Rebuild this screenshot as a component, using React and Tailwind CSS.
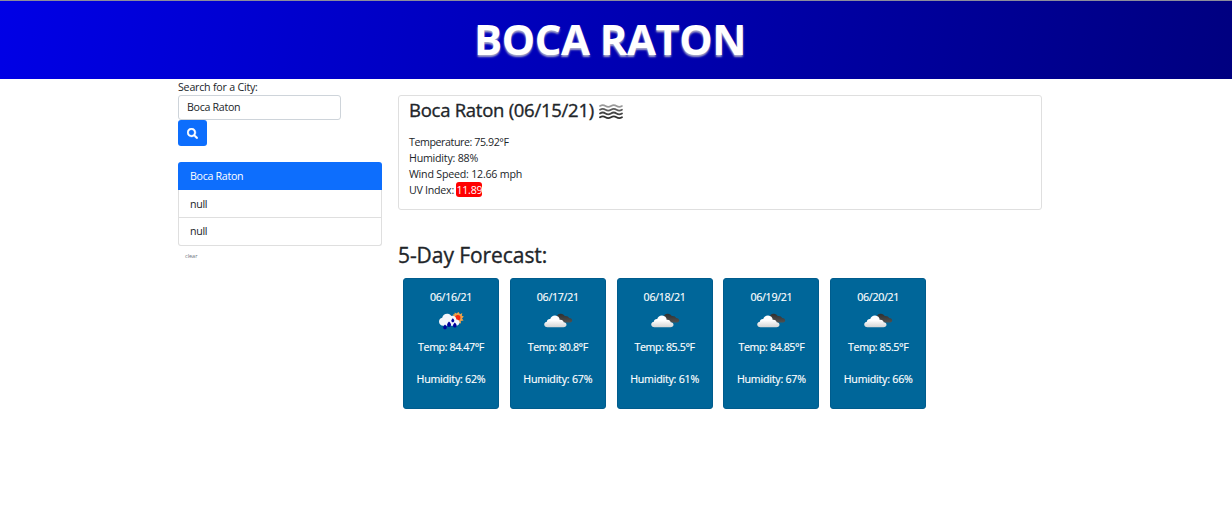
const forecast = [
  { date: '06/16/21', temp: '84.47', humidity: 62, icon: 'rain' },
  { date: '06/17/21', temp: '80.8', humidity: 67, icon: 'cloud' },
  { date: '06/18/21', temp: '85.5', humidity: 61, icon: 'cloud' },
  { date: '06/19/21', temp: '84.85', humidity: 67, icon: 'cloud' },
  { date: '06/20/21', temp: '85.5', humidity: 66, icon: 'cloud' },
];

function CloudIcon() {
  return (
    <svg width="34" height="34" viewBox="0 0 34 34" className="block">
      <defs>
        <linearGradient id="cloudFill" x1="0" y1="0" x2="0" y2="1">
          <stop offset="0.4" stopColor="#ffffff" />
          <stop offset="1" stopColor="#d4d4d4" />
        </linearGradient>
        <linearGradient id="darkFill" x1="0" y1="0" x2="0" y2="1">
          <stop offset="0" stopColor="#303030" />
          <stop offset="1" stopColor="#505050" />
        </linearGradient>
      </defs>
      <path d="M15.500 12.500c.3-2.800 2.300-4.100 4.500-3.700 1.600.1 2.900 1 3.700 2.200 2.200-.3 3.900.6 4.400 2 1.900.1 3.200 1.200 3.100 2.500-.1 1.500-1.300 2.100-2.900 2.100H21z" fill="url(#darkFill)" />
      <path d="M6.500 22.200c-2 0-3.300-1.100-3.300-2.700 0-1.500 1.100-2.600 2.700-2.800.1-1.800 1.500-2.900 3.300-2.700.8-2.300 2.600-3.600 4.900-3.500 2.700.1 4.500 1.900 4.700 4.400 1.900-.4 3.600.7 3.900 2.400 1.700.1 2.800 1 2.800 2.500 0 1.500-1.200 2.400-3 2.400z" fill="url(#cloudFill)" />
    </svg>
  );
}

function RainIcon() {
  return (
    <svg width="34" height="34" viewBox="0 0 34 34" className="block">
      <g transform="translate(1.500 1)">
        <path d="M23 6l1.500 2.300 2.300-1.200-.5 2.600 2 .8-1.800 1.900 1.600 2.200-2.800.3.200 2.700-3-1.200-3 .4-2-8.300 1.500-.2.200-1.700 1.800.8z" fill="#eda24a" />
        <circle cx="22.300" cy="11.800" r="2.700" fill="#f5280c" />
        <path d="M8 19.800c-2.800 0-4.500-1.800-4.500-4 0-2.200 1.300-3.600 3.200-4 .6-2.800 3-4.400 5.700-4 1.500.2 2.700 1 3.400 2.200 2.500-.7 4.800.9 5.100 3.400 2 .2 3.300 1.500 3.200 3.200-.1 2-1.600 3.200-3.600 3.200z" fill="#f4f6fb" />
        <g fill="#00009c">
          <path d="M13.500 15.500c1.600 1.600 2 2.600 2 3.500 0 1.200-.9 2-2 2s-1.900-.8-1.900-2c0-.9.500-1.900 1.900-3.500z" />
          <path d="M17.300 12.200c1.200 1.200 1.500 1.900 1.500 2.600 0 .9-.7 1.500-1.500 1.500s-1.500-.6-1.500-1.500c0-.7.500-1.500 1.500-2.600z" />
          <path d="M19.300 16.500c1.500 1.500 1.800 2.300 1.800 3.200 0 1.100-.8 1.800-1.800 1.800s-1.800-.7-1.800-1.800c0-.9.500-1.800 1.800-3.200z" />
          <path d="M9.500 18.500c1.400 1.400 1.800 2.200 1.800 3 0 1.100-.8 1.800-1.800 1.800s-1.800-.7-1.800-1.800c0-.8.500-1.600 1.800-3z" />
        </g>
      </g>
    </svg>
  );
}

function MistIcon() {
  return (
    <svg width="24" height="16" viewBox="0 0 24 16" fill="none" strokeLinecap="round" className="mt-[5px] ml-[5px] block">
      <path d="M1 2q2.800-1.800 5.500 0t5.500 0 5.500 0 5.500 0" stroke="#999" strokeWidth="1.600" />
      <path d="M1 5.700q2.800-1.800 5.500 0t5.500 0 5.500 0 5.500 0" stroke="#5c5c5c" strokeWidth="1.700" />
      <path d="M1 9.400q2.800-1.800 5.500 0t5.500 0 5.500 0 5.500 0" stroke="#444" strokeWidth="1.800" />
      <path d="M1 13.200q2.800-1.800 5.500 0t5.500 0 5.500 0 5.500 0" stroke="#303030" strokeWidth="1.800" />
    </svg>
  );
}

export default function App() {
  return (
    <div className="h-[530px] overflow-hidden bg-white font-['Open_Sans','Noto_Sans',sans-serif] text-[10.67px] leading-4 tracking-[-0.3px] text-[#212529]">
      <header className="h-[79px] border-t border-[#8c8c9c] bg-[linear-gradient(100deg,#0000e6,#000080)] text-center">
        <h1 className="pr-[12px] pt-[8px] text-[42px] leading-[60px] font-bold tracking-[-0.5px] text-white [text-shadow:0_2px_2px_#a9a9c9]">BOCA RATON</h1>
      </header>
      <main className="flex pl-[178px]">
        <aside className="w-[204px]">
          <label className="block tracking-[-0.22px]" htmlFor="city">Search for a City:</label>
          <input id="city" defaultValue="Boca Raton" className="block h-[25px] w-[163px] rounded-[3px] border border-[#ced4da] bg-white px-2 pb-[2px] outline-none" />
          <button className="flex h-[26px] w-[29px] items-center justify-center rounded-[3px] bg-[#0d6efd]" aria-label="Search">
            <svg width="11" height="11" viewBox="0 0 512 512" fill="white" stroke="white" strokeWidth="16">
              <path d="M505 442.700L405.300 343c-4.500-4.500-10.600-7-17-7H372c27.600-35.300 44-79.700 44-128C416 93.100 322.900 0 208 0S0 93.100 0 208s93.100 208 208 208c48.300 0 92.700-16.400 128-44v16.300c0 6.400 2.500 12.500 7 17l99.700 99.700c9.400 9.400 24.600 9.400 33.900 0l28.300-28.300c9.400-9.400 9.400-24.600.1-34zM208 336c-70.700 0-128-57.200-128-128 0-70.700 57.200-128 128-128 70.700 0 128 57.200 128 128 0 70.700-57.200 128-128 128z" />
            </svg>
          </button>
          <ul className="mt-4 h-[84px]">
            <li className="h-7 rounded-t-[3px] bg-[#0d6efd] px-3 leading-7 text-white">Boca Raton</li>
            <li className="h-7 border-x border-b border-[#dfdfdf] px-[11px] leading-7">null</li>
            <li className="h-7 rounded-b-[3px] border-x border-b border-[#dfdfdf] px-[11px] leading-[27px]">null</li>
          </ul>
          <button className="mt-1 block pl-[7px] text-[5.500px] leading-3 tracking-[0px] text-[#6c757d]">clear</button>
        </aside>
        <section className="ml-4 w-[644px] pt-4">
          <div className="h-[115px] rounded-[3px] border border-[#dfdfdf] px-[10px] pt-[3px]">
            <div className="flex h-[23px]">
              <h2 className="text-[18.500px] leading-[22px] font-medium tracking-[-0.27px] [-webkit-text-stroke:0.35px_#212529]">Boca Raton (06/15/21)</h2>
              <MistIcon />
            </div>
            <div className="mt-3">
              <p className="tracking-[-0.42px]">Temperature: 75.92°F</p>
              <p className="tracking-[-0.22px]">Humidity: 88%</p>
              <p className="tracking-[-0.22px]">Wind Speed: 12.66 mph</p>
              <p className="tracking-[-0.26px]">UV Index: <span className="inline-block h-[15px] rounded-[3px] bg-[red] text-white">11.89</span></p>
            </div>
          </div>
          <h2 className="mt-8 text-[21px] leading-[26px] font-medium tracking-[-0.07px] [-webkit-text-stroke:0.35px_#212529]">5-Day Forecast:</h2>
          <div className="mt-[10px] ml-[5px] flex gap-[10.800px]">
            {forecast.map((day) => (
              <article key={day.date} className="flex h-[131px] w-24 flex-col items-center rounded-[3px] border border-[#005c8d] bg-[#006699] pt-[10px] text-white [-webkit-text-stroke:0.15px_white]">
                <p>{day.date}</p>
                {day.icon === 'rain' ? <RainIcon /> : <CloudIcon />}
                <p className="tracking-[-0.4px]">Temp: {day.temp}°F</p>
                <p className="mt-4 tracking-[-0.23px]">Humidity: {day.humidity}%</p>
              </article>
            ))}
          </div>
        </section>
      </main>
    </div>
  );
}
